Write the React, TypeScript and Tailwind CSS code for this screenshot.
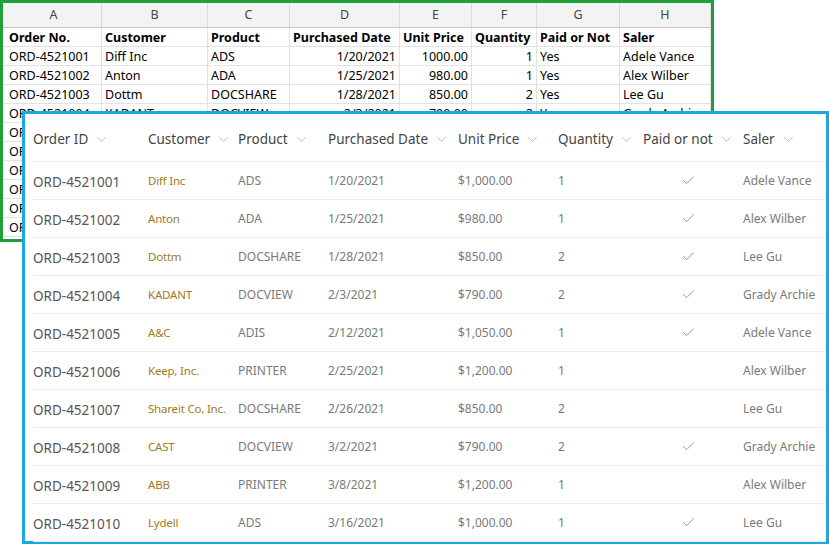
import { ChevronDown, Check } from "lucide-react";

type Row = { id: string; cust: string; prod: string; date: string; price: number; qty: number; paid: boolean; saler: string };

const rows: Row[] = [
  { id: "ORD-4521001", cust: "Diff Inc", prod: "ADS", date: "1/20/2021", price: 1000, qty: 1, paid: true, saler: "Adele Vance" },
  { id: "ORD-4521002", cust: "Anton", prod: "ADA", date: "1/25/2021", price: 980, qty: 1, paid: true, saler: "Alex Wilber" },
  { id: "ORD-4521003", cust: "Dottm", prod: "DOCSHARE", date: "1/28/2021", price: 850, qty: 2, paid: true, saler: "Lee Gu" },
  { id: "ORD-4521004", cust: "KADANT", prod: "DOCVIEW", date: "2/3/2021", price: 790, qty: 2, paid: true, saler: "Grady Archie" },
  { id: "ORD-4521005", cust: "A&C", prod: "ADIS", date: "2/12/2021", price: 1050, qty: 1, paid: true, saler: "Adele Vance" },
  { id: "ORD-4521006", cust: "Keep, Inc.", prod: "PRINTER", date: "2/25/2021", price: 1200, qty: 1, paid: false, saler: "Alex Wilber" },
  { id: "ORD-4521007", cust: "Shareit Co, Inc.", prod: "DOCSHARE", date: "2/26/2021", price: 850, qty: 2, paid: false, saler: "Lee Gu" },
  { id: "ORD-4521008", cust: "CAST", prod: "DOCVIEW", date: "3/2/2021", price: 790, qty: 2, paid: true, saler: "Grady Archie" },
  { id: "ORD-4521009", cust: "ABB", prod: "PRINTER", date: "3/8/2021", price: 1200, qty: 1, paid: false, saler: "Alex Wilber" },
  { id: "ORD-4521010", cust: "Lydell", prod: "ADS", date: "3/16/2021", price: 1000, qty: 1, paid: true, saler: "Lee Gu" },
];

const xlCols = ["w-[96px]", "w-[106px]", "w-[82px]", "w-[110px]", "w-[72px]", "w-[65px]", "w-[83px]", "w-[91px]"];
const xlHead = ["Order No.", "Customer", "Product", "Purchased Date", "Unit Price", "Quantity", "Paid or Not", "Saler"];
const letters = ["A", "B", "C", "D", "E", "F", "G", "H"];

const cols = [
  { label: "Order ID", w: "w-[115px]" },
  { label: "Customer", w: "w-[90px]" },
  { label: "Product", w: "w-[90px]" },
  { label: "Purchased Date", w: "w-[130px]" },
  { label: "Unit Price", w: "w-[100px]" },
  { label: "Quantity", w: "w-[85px]" },
  { label: "Paid or not", w: "w-[100px]" },
  { label: "Saler", w: "w-[80px]" },
];

const money = (n: number) => "$" + n.toLocaleString("en-US", { minimumFractionDigits: 2 });

export default function App() {
  return (
    <div className="relative h-[544px] w-[829px] overflow-hidden bg-white" style={{ fontFamily: '"Noto Sans", "Open Sans", sans-serif' }}>
      {/* spreadsheet */}
      <div className="w-[714px] h-[242px] border-[3px] border-[#20a03a] bg-white overflow-hidden text-[12.5px] text-black">
        <div className="flex h-[25px] bg-[#f3f3f3] border-b border-[#c8c8c8] text-[#444]">
          {letters.map((l, i) => (
            <div key={l} className={`${xlCols[i]} shrink-0 flex items-center justify-center border-r border-[#dcdcdc] ${i === 0 ? "ml-[3px]" : ""}`}>{l}</div>
          ))}
        </div>
        <div className="flex h-[19px] border-b border-[#e2e2e2] font-bold">
          {xlHead.map((h, i) => (
            <div key={h} className={`${xlCols[i]} shrink-0 px-[3px] leading-[19px] border-r border-[#e2e2e2] whitespace-nowrap ${i === 0 ? "ml-[3px]" : ""}`}>{h}</div>
          ))}
        </div>
        {rows.map((r) => {
          const cells = [r.id, r.cust, r.prod, r.date, r.price.toFixed(2), String(r.qty), r.paid ? "Yes" : "No", r.saler];
          return (
            <div key={r.id} className="flex h-[19px] border-b border-[#e2e2e2]">
              {cells.map((c, i) => (
                <div key={i} className={`${xlCols[i]} shrink-0 px-[3px] leading-[19px] border-r border-[#e2e2e2] whitespace-nowrap ${i === 0 ? "ml-[3px]" : ""} ${i === 3 || i === 4 || i === 5 ? "text-right" : ""}`}>{c}</div>
              ))}
            </div>
          );
        })}
      </div>

      {/* list view overlay */}
      <div className="absolute left-[22px] top-[111px] w-[807px] h-[433px] border-[3px] border-[#1ba8e0] bg-white pl-[8px]">
        <div className="flex h-[48px] items-center pt-[4px] border-b border-[#ececec] text-[13.5px] text-[#444]">
          {cols.map((c) => (
            <div key={c.label} className={`${c.w} shrink-0 flex items-center gap-[6px] whitespace-nowrap`}>
              {c.label}
              <ChevronDown size={15} strokeWidth={1.1} className="text-[#999]" />
            </div>
          ))}
        </div>
        {rows.map((r) => (
          <div key={r.id} className="flex h-[38px] items-center border-b border-[#ececec] text-[12px] text-[#7a7a7a]">
            <div className="w-[115px] shrink-0 text-[13.5px] text-[#555] pt-[3px]">{r.id}</div>
            <div className="w-[90px] shrink-0 text-[#a07b1c] whitespace-nowrap text-[11.5px] tracking-[-0.2px]">{r.cust}</div>
            <div className="w-[90px] shrink-0">{r.prod}</div>
            <div className="w-[130px] shrink-0">{r.date}</div>
            <div className="w-[100px] shrink-0">{money(r.price)}</div>
            <div className="w-[85px] shrink-0">{r.qty}</div>
            <div className="w-[100px] shrink-0 pl-[38px]">{r.paid && <Check size={15} strokeWidth={1.1} className="text-[#666]" />}</div>
            <div className="w-[80px] shrink-0 whitespace-nowrap">{r.saler}</div>
          </div>
        ))}
      </div>
    </div>
  );
}
